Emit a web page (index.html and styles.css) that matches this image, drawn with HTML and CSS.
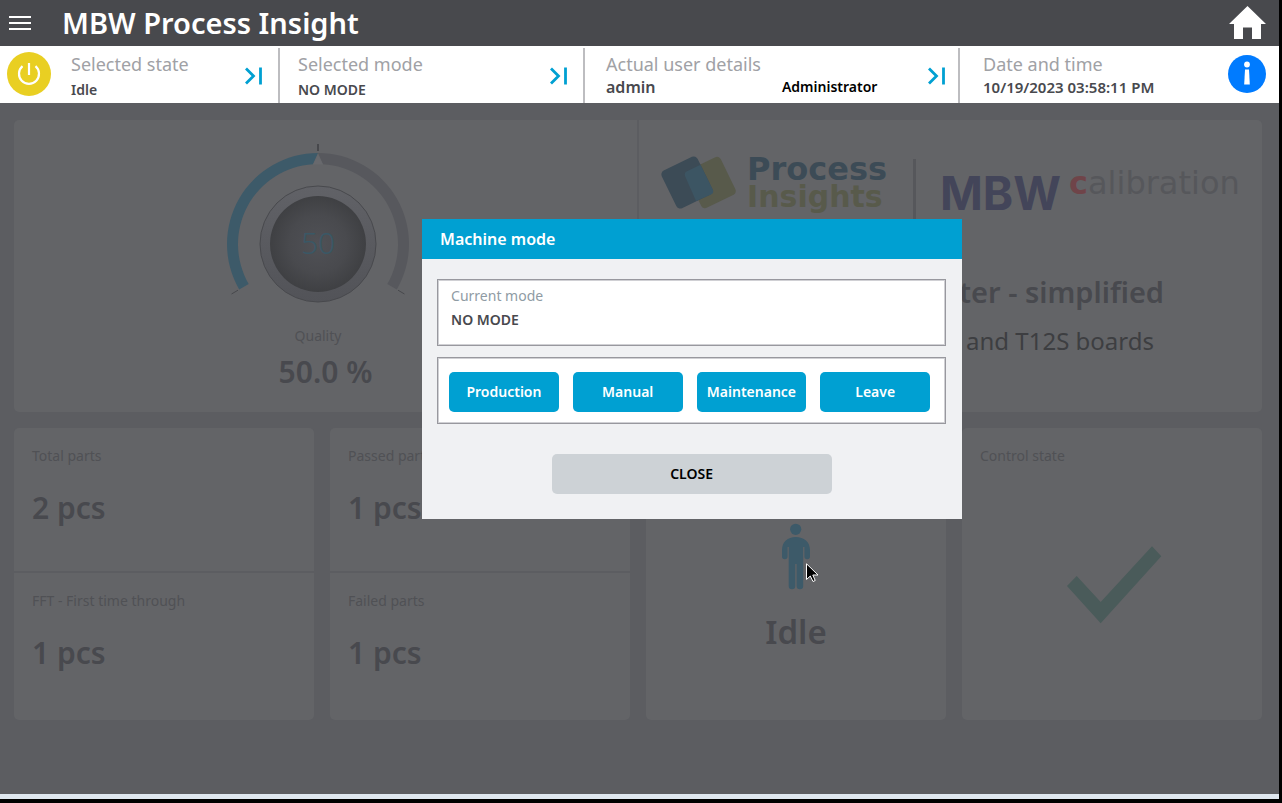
FILE: index.html
```html
<!DOCTYPE html>
<html lang="en">
<head>
<meta charset="utf-8">
<title>MBW Process Insight</title>
<link rel="stylesheet" href="styles.css">
</head>
<body>
<div class="screen">
  <header class="topbar">
    <button class="icon-button" aria-label="Menu">
      <svg width="22" height="14" viewBox="0 0 22 14"><path d="M0 1h22M0 7h22M0 13h22" stroke="#fff" stroke-width="2.200"/></svg>
    </button>
    <h1 class="app-title">MBW Process Insight</h1>
    <a class="home" href="#" aria-label="Home">
      <svg width="37" height="34" viewBox="0 0 37 34"><path d="M18.500 0 37 18H32V33H23V21.500H14V33H5V18H0Z" fill="#fff"/></svg>
    </a>
  </header>

  <section class="status">
    <div class="status-item state">
      <button class="icon-button" aria-label="Power">
        <svg width="44" height="44" viewBox="0 0 44 44"><circle cx="22" cy="22" r="22" fill="#e9cf22"/><path d="M22 11V23M15.500 14.200A10 10 0 1 0 28.500 14.200" fill="none" stroke="#fff" stroke-width="2.200"/></svg>
      </button>
      <div class="status-text">
        <span class="status-label">Selected state</span>
        <span class="status-value low">Idle</span>
      </div>
      <button class="icon-button next" aria-label="Change state">
        <svg width="18" height="18" viewBox="0 0 18 18"><path d="M1 1.500 8.500 9 1 16.500M15.500 .5V17.500" fill="none" stroke="#00a0d2" stroke-width="2.800"/></svg>
      </button>
    </div>
    <div class="status-item mode">
      <div class="status-text">
        <span class="status-label">Selected mode</span>
        <span class="status-value low">NO MODE</span>
      </div>
      <button class="icon-button next" aria-label="Change mode">
        <svg width="18" height="18" viewBox="0 0 18 18"><path d="M1 1.500 8.500 9 1 16.500M15.500 .5V17.500" fill="none" stroke="#00a0d2" stroke-width="2.800"/></svg>
      </button>
    </div>
    <div class="status-item user">
      <div class="status-text">
        <span class="status-label">Actual user details</span>
        <span class="status-value large">admin</span>
      </div>
      <span class="status-value role">Administrator</span>
      <button class="icon-button next" aria-label="Change user">
        <svg width="18" height="18" viewBox="0 0 18 18"><path d="M1 1.500 8.500 9 1 16.500M15.500 .5V17.500" fill="none" stroke="#00a0d2" stroke-width="2.800"/></svg>
      </button>
    </div>
    <div class="status-item clock">
      <div class="status-text">
        <span class="status-label">Date and time</span>
        <span class="status-value time">10/19/2023 03:58:11 PM</span>
      </div>
      <button class="icon-button info" aria-label="Information">
        <svg width="38" height="38" viewBox="0 0 38 38"><circle cx="19" cy="19" r="19" fill="#007bff"/><circle cx="19" cy="9.500" r="2.900" fill="#fff"/><path d="M17 14.500H21L21.800 29.500H16.200Z" fill="#fff"/></svg>
      </button>
    </div>
  </section>

  <main class="board">
    <section class="card overview">
      <div class="quality">
        <svg class="gauge" width="184" height="160" viewBox="-92 -104 184 160">
          <defs>
            <radialGradient id="knob"><stop offset="0" stop-color="#505156"/><stop offset=".6" stop-color="#494a4e"/><stop offset="1" stop-color="#3f4043"/></radialGradient>
            <linearGradient id="ring" x2="0" y2="1"><stop offset="0" stop-color="#616267"/><stop offset="1" stop-color="#525358"/></linearGradient>
          </defs>
          <path d="M-78.800 45.500A91 91 0 0 1 0 -91L-5 -79.800A80 80 0 0 0 -69.300 40Z" fill="#3d5a69"/>
          <path d="M78.800 45.500A91 91 0 0 0 0 -91L5 -79.800A80 80 0 0 1 69.300 40Z" fill="#57585d"/>
          <path d="M0 -90 -5 -79.500H5Z" fill="#68696d"/>
          <path d="M0 -100V-93" stroke="#47484c" stroke-width="2"/>
          <path d="M-80 46.200-86.500 50M80 46.200 86.500 50" stroke="#47484c"/>
          <circle r="58" fill="url(#ring)" stroke="#48494d"/>
          <circle r="48" fill="url(#knob)"/>
          <text class="gauge-value" y="10" text-anchor="middle">50</text>
        </svg>
        <span class="gauge-label">Quality</span>
        <strong class="figure">50.0 %</strong>
      </div>
      <div class="product">
        <div class="logos">
          <svg width="75" height="51" viewBox="0 0 75 51"><rect x="-19" y="-19" width="38" height="38" rx="4" transform="translate(49 25.500) rotate(-26)scale(1 1.100)" fill="#585a4b"/><rect x="-19" y="-19" width="38" height="38" rx="4" transform="translate(25 25.500) rotate(-26)scale(1.050 1.100)" fill="#3c4b56"/><path d="M24.500 14.500 38.500 7.800 51 33Q52 36 49 37.500L34 44 23 19Q22 16 24.500 14.500Z" fill="#3c5563"/></svg>
          <div class="brand"><span class="brand-top">Process</span><span class="brand-bottom">Insights</span></div>
          <span class="logo-rule"></span>
          <span class="mbw">MBW</span>
          <span class="calibration"><b>c</b>alibration</span>
        </div>
        <strong class="product-name">ter - simplified</strong>
        <span class="product-note">and T12S boards</span>
      </div>
    </section>

    <section class="card split">
      <div class="stat"><span class="stat-label">Total parts</span><strong class="figure">2 pcs</strong></div>
      <div class="stat"><span class="stat-label">FFT - First time through</span><strong class="figure">1 pcs</strong></div>
    </section>
    <section class="card split">
      <div class="stat"><span class="stat-label">Passed parts</span><strong class="figure">1 pcs</strong></div>
      <div class="stat"><span class="stat-label">Failed parts</span><strong class="figure">1 pcs</strong></div>
    </section>
    <section class="card machine">
      <svg width="28" height="67" viewBox="0 0 28 67"><circle cx="13.700" cy="6.300" r="5.600" fill="#3d5a69"/><path d="M13.800 14C22 14 28 19 28 27V33.500A2.700 2.700 0 0 1 22.400 33.500V24H21.200V63A3.200 3.200 0 0 1 14.600 63V41H13.300V63A3.200 3.200 0 0 1 6.700 63V24H5.600V33.500A2.700 2.700 0 0 1 0 33.500V27C0 19 5.600 14 13.800 14Z" fill="#3d5a69"/></svg>
      <strong class="machine-state">Idle</strong>
    </section>
    <section class="card control">
      <span class="stat-label">Control state</span>
      <svg width="90" height="78" viewBox="0 0 90 78"><path d="M0 40 9.700 30 33.700 56 85 .3 94.300 10.300 33.700 77.300Z" fill="#4a5b5a"/></svg>
    </section>

    <div class="dialog" role="dialog" aria-labelledby="dialog-title">
      <h2 class="dialog-title" id="dialog-title">Machine mode</h2>
      <div class="dialog-body">
        <div class="panel current">
          <span class="current-label">Current mode</span>
          <strong class="current-value">NO MODE</strong>
        </div>
        <div class="panel modes">
          <button class="button">Production</button>
          <button class="button">Manual</button>
          <button class="button">Maintenance</button>
          <button class="button">Leave</button>
        </div>
        <button class="button close">CLOSE</button>
      </div>
    </div>

    <svg class="pointer" width="13" height="20" viewBox="0 0 13 20"><path d="M.5 .8V16.500L4.300 13 7 18.500 9.200 17.500 6.800 12H12Z" fill="#000" stroke="#fff"/></svg>
  </main>
  <footer class="strip"></footer>
</div>
</body>
</html>
```
FILE: styles.css
```css
* { box-sizing: border-box; }

body {
  margin: 0;
  background: #000;
  color: #48494e;
  font-family: "Noto Sans", "Open Sans", sans-serif;
  font-size: 14px;
  line-height: 20px;
}

h1, h2 { margin: 0; }
svg { display: block; flex: none; overflow: visible; }
strong { font-weight: 600; }

.screen {
  display: flex;
  flex-direction: column;
  min-height: 100vh;
  border: solid #000;
  border-width: 0 3px 4px 0;
}

.icon-button {
  padding: 0;
  border: 0;
  background: none;
  cursor: pointer;
}

/* Title bar */
.topbar {
  display: flex;
  align-items: center;
  height: 46px;
  padding: 0 13px 0 9px;
  background: #48494d;
}
.app-title {
  margin-left: 31px;
  color: #fff;
  font-size: 29px;
  font-weight: 600;
  line-height: 46px;
}
.home { margin-left: auto; }

/* Status bar */
.status {
  display: grid;
  grid-template-columns: 280fr 305fr 375fr 319fr;
  padding-top: 2px;
  background: #fff;
}
.status-item {
  display: flex;
  align-items: flex-start;
  height: 55px;
  border-right: 2px solid #bdbdc0;
}
.status-item .icon-button { margin-top: 4px; }
.status-item .next { margin: 19px 15px 0 auto; }
.state { padding-left: 7px; gap: 20px; }
.mode { padding-left: 18px; }
.user { padding-left: 21px; }
.user .next { margin-right: 12px; }
.clock { padding-left: 23px; border-right: 0; }
.clock .info { margin: 7px 13px 0 auto; }
.status-text {
  display: flex;
  flex-direction: column;
  padding-top: 4px;
}
.status-label {
  color: #a0a1a5;
  font-size: 18px;
  line-height: 24px;
}
.status-value { font-weight: 600; line-height: 22px; }
.low { padding-top: 3px; }
.large { font-size: 16px; }
.time { font-size: 15px; }
.role { margin: 28px 0 0 21px; color: #000; }

/* Dashboard */
.board {
  position: relative;
  flex: 1;
  display: grid;
  grid-template-columns: repeat(4, 1fr);
  align-content: start;
  gap: 16px;
  padding: 17px 17px 17px 14px;
  background: #5c5d61;
}
.card {
  min-height: 292px;
  border-radius: 5px;
  background: #636467;
}
.overview {
  grid-column: 1 / -1;
  display: grid;
  grid-template-columns: 625fr 623fr;
}
.quality {
  display: flex;
  flex-direction: column;
  align-items: center;
  padding-top: 20px;
  border-right: 2px solid #5c5d61;
}
.gauge { margin-right: 15px; }
.gauge-value {
  fill: #3a5866;
  font-size: 30px;
  font-weight: 300;
}
.gauge-label {
  margin: 26px 15px 6px 0;
  color: #505155;
}
.figure { font-size: 30px; line-height: 40px; }

.product { display: flex; flex-direction: column; }
.logos {
  display: flex;
  align-items: flex-start;
  padding: 37px 0 0 23px;
}
.brand {
  display: flex;
  flex-direction: column;
  width: 141px;
  margin: -2px 0 0 10px;
  font-family: "DejaVu Sans", sans-serif;
  font-weight: 700;
  line-height: 28px;
}
.brand-top { color: #3c4b56; font-size: 32px; }
.brand-bottom { color: #585a4b; font-size: 30px; }
.logo-rule {
  width: 3px;
  height: 66px;
  margin: 2px 24px 0 25px;
  background: #56575b;
}
.mbw {
  color: #434559;
  font-family: Inter, sans-serif;
  font-size: 46px;
  font-weight: 700;
  line-height: 72px;
}
.calibration {
  margin: 8px 0 0 8px;
  color: #56575b;
  font-family: "DejaVu Sans", sans-serif;
  font-size: 32px;
  line-height: 36px;
}
.calibration b { color: #6f4449; }
.product-name {
  margin: 43px 98px 0 auto;
  font-size: 29px;
  line-height: 40px;
}
.product-note {
  margin: 12px 108px 0 auto;
  color: #3d3e41;
  font-size: 24px;
  line-height: 34px;
}

.split { display: grid; grid-template-rows: 143fr 149fr; }
.stat {
  display: flex;
  flex-direction: column;
  gap: 22px;
  padding: 18px;
}
.stat + .stat { border-top: 2px solid #5c5d61; }
.stat-label { color: #505155; }

.machine {
  display: flex;
  flex-direction: column;
  align-items: center;
  gap: 19px;
  padding-top: 95px;
}
.machine-state { font-size: 33px; line-height: 46px; }
.control {
  display: flex;
  flex-direction: column;
  gap: 80px;
  padding: 18px;
}
.control svg { align-self: center; }

/* Mode dialog */
.dialog {
  position: absolute;
  top: 116px;
  left: 33%;
  width: 540px;
  background: #f0f1f3;
}
.dialog-title {
  padding: 0 18px;
  background: #00a0d2;
  color: #fff;
  font-size: 16px;
  font-weight: 600;
  line-height: 40px;
}
.dialog-body {
  display: flex;
  flex-direction: column;
  gap: 11px;
  padding: 20px 16px 25px 15px;
}
.panel {
  border: 1px solid #98989e;
  background: #fff;
  box-shadow: inset 0 0 0 1px #d0d0d4;
}
.current {
  display: flex;
  flex-direction: column;
  gap: 4px;
  padding: 6px 13px 15px;
}
.current-label { color: #8f9ba4; }
.modes {
  display: grid;
  grid-template-columns: repeat(4, 1fr);
  gap: 14px;
  padding: 14px 15px 11px 11px;
}
.button {
  height: 40px;
  padding: 0 0 1px;
  border: 0;
  border-radius: 5px;
  background: #00a0d2;
  color: #fff;
  font: 600 14px "Noto Sans", "Open Sans", sans-serif;
  cursor: pointer;
}
.close {
  align-self: center;
  width: 280px;
  margin-top: 19px;
  background: #cdd2d6;
  color: #000;
}

.pointer {
  position: absolute;
  top: 460px;
  left: 63%;
}

.strip { height: 5px; background: #dfe7ef; }
```
